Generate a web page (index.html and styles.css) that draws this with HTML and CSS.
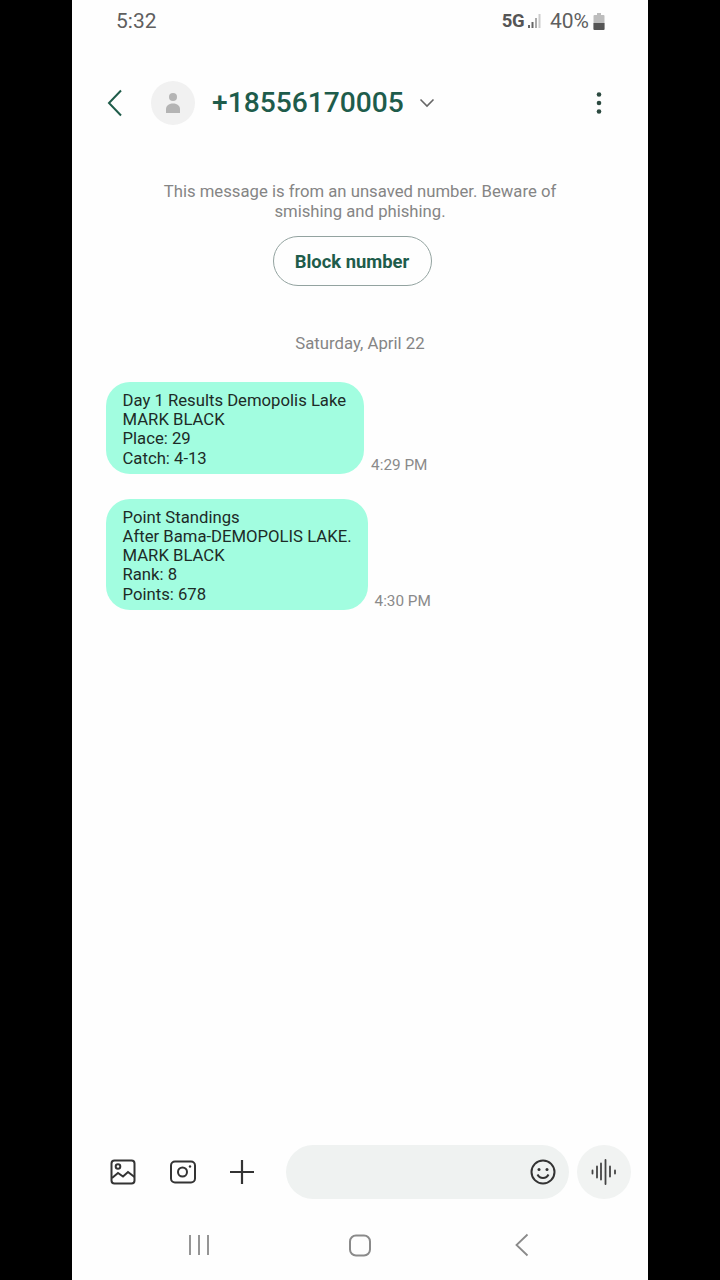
FILE: index.html
```html
<!DOCTYPE html>
<html lang="en">
<head>
<meta charset="utf-8">
<title>Messages</title>
<link rel="stylesheet" href="styles.css">
</head>
<body>
<main class="phone">
  <div class="status">
    <span class="time">5:32</span>
    <div class="status-right">
      <span class="net">5G</span>
      <svg class="signal" width="16" height="16" viewBox="0 0 16 16"><rect x="1" y="12" width="2" height="3" fill="#666"/><rect x="4.5" y="9" width="2" height="6" fill="#666"/><rect x="8" y="5" width="2" height="10" fill="#aaa"/><rect x="11.5" y="1" width="2" height="14" fill="#ccc"/></svg>
      <span class="batt-text">40%</span>
      <svg class="battery" width="12" height="18" viewBox="0 0 12 18"><path d="M4 1h4v2h2.500a1 1 0 0 1 1 1v13a1 1 0 0 1-1 1h-9a1 1 0 0 1-1-1V4a1 1 0 0 1 1-1H4z" fill="#bdbdbd"/><path d="M.5 11h11v6a1 1 0 0 1-1 1h-9a1 1 0 0 1-1-1z" fill="#555"/></svg>
    </div>
  </div>
  <header class="header">
    <svg class="back" width="18" height="28" viewBox="0 0 18 28"><path d="M15 1.500 3 14l12 12.500" fill="none" stroke="#1f5c4a" stroke-width="2"/></svg>
    <div class="avatar">
      <svg width="18" height="24" viewBox="0 0 18 24"><circle cx="9" cy="6" r="4" fill="#b4b4b4"/><path d="M2 22v-4C2 15 4.500 12.500 9 12.500s7 2.500 7 5.500v4z" fill="#b4b4b4"/></svg>
    </div>
    <h1 class="title">+18556170005</h1>
    <svg class="chev" width="16" height="10" viewBox="0 0 16 10"><path d="M1.500 1.500 8 8l6.500-6.500" fill="none" stroke="#666" stroke-width="1.600"/></svg>
    <svg class="more" width="6" height="24" viewBox="0 0 6 24"><circle cx="3" cy="3.500" r="2.300" fill="#2c4a40"/><circle cx="3" cy="12" r="2.300" fill="#2c4a40"/><circle cx="3" cy="20.500" r="2.300" fill="#2c4a40"/></svg>
  </header>
  <section class="thread">
    <p class="warning">This message is from an unsaved number. Beware of smishing and phishing.</p>
    <div class="block-wrap"><button class="block">Block number</button></div>
    <p class="date">Saturday, April 22</p>
    <div class="msg msg-first">
      <div class="bubble">Day 1 Results Demopolis Lake<br>MARK BLACK<br>Place: 29<br>Catch: 4-13</div>
      <span class="stamp">4:29 PM</span>
    </div>
    <div class="msg msg-second">
      <div class="bubble">Point Standings<br>After Bama-DEMOPOLIS LAKE.<br>MARK BLACK<br>Rank: 8<br>Points: 678</div>
      <span class="stamp">4:30 PM</span>
    </div>
  </section>
  <div class="composer">
    <svg class="tool" width="28" height="28" viewBox="0 0 28 28" fill="none" stroke="#333" stroke-width="2"><rect x="2.500" y="2.500" width="23" height="23" rx="3"/><circle cx="9" cy="8.500" r="2.300"/><path d="M3 20l6-5 5 3.500 5-4.500 6.500 5"/></svg>
    <svg class="tool tool-cam" width="28" height="28" viewBox="0 0 28 28" fill="none" stroke="#333" stroke-width="2"><rect x="2" y="3.500" width="24" height="21" rx="4"/><circle cx="13.500" cy="14" r="4.500"/><circle cx="21" cy="8.500" r="1.200" fill="#333" stroke="none"/></svg>
    <svg class="tool tool-plus" width="26" height="26" viewBox="0 0 26 26" stroke="#333" stroke-width="2.200"><path d="M13 1v24M1 13h24"/></svg>
    <div class="input">
      <svg width="28" height="28" viewBox="0 0 28 28" fill="none" stroke="#333" stroke-width="2"><circle cx="14" cy="14" r="11.500"/><circle cx="10" cy="11.500" r="1.500" fill="#333" stroke="none"/><circle cx="18" cy="11.500" r="1.500" fill="#333" stroke="none"/><path d="M8.500 16.500c1.200 2.500 3 3.500 5.500 3.500s4.300-1 5.500-3.500"/></svg>
    </div>
    <div class="voice">
      <svg width="26" height="26" viewBox="0 0 26 26" stroke="#444" stroke-width="1.800" stroke-linecap="round"><path d="M1.500 11.500v3M6 7.500v11M10 4.500v16M14.500 1v24M19 7.500v10M24 11.500v3"/></svg>
    </div>
  </div>
  <nav class="navbar">
    <svg width="22" height="22" viewBox="0 0 22 22" stroke="#8a8a8a" stroke-width="1.800"><path d="M2 1v20M11 1v20M20 1v20"/></svg>
    <svg class="nav-home" width="24" height="24" viewBox="0 0 24 24" fill="none" stroke="#8a8a8a" stroke-width="2"><rect x="2" y="2.500" width="20" height="20" rx="6"/></svg>
    <svg width="16" height="24" viewBox="0 0 16 24" fill="none" stroke="#8a8a8a" stroke-width="1.800"><path d="M13.500 1.500 2.500 12l11 10.500"/></svg>
  </nav>
</main>
</body>
</html>
```
FILE: styles.css
```css
* { box-sizing: border-box; }
html, body { margin: 0; padding: 0; height: 100%; background: #000; overflow: hidden; }
body { display: flex; justify-content: center; font-family: Roboto, "Liberation Sans", sans-serif; }
.phone { width: 576px; height: 1280px; background: #fefefe; display: flex; flex-direction: column; }

.status { height: 42px; padding: 0 43px 0 44px; display: flex; align-items: center; justify-content: space-between; color: #5f5f5f; }
.time { font-size: 21px; }
.status-right { display: flex; align-items: center; }
.net { font-size: 18.500px; font-weight: 700; letter-spacing: -0.5px; color: #555; }
.signal { margin: 0 7px 0 3px; }
.batt-text { font-size: 21px; margin-right: 4px; }

.header { height: 70px; margin-top: 26px; padding: 0 46px 0 34px; display: flex; align-items: center; }
.back { flex: none; }
.avatar { width: 44px; height: 44px; margin-left: 27px; border-radius: 50%; background: #f1f1f1; display: flex; align-items: center; justify-content: center; }
.title { margin: 0 0 2px 17px; font-size: 28.200px; font-weight: 500; color: #1e5c4b; }
.chev { margin-left: 15px; }
.more { margin-left: auto; }

.thread { flex: 1; padding: 0 34px; min-height: 0; }
.warning { margin: 44px auto 0; width: 420px; font-size: 16.700px; line-height: 20px; text-align: center; color: #858585; }
.block-wrap { display: flex; justify-content: center; margin-top: 14px; padding-right: 16px; }
.block { width: 159px; height: 50px; border: 1.500px solid #93a3a0; border-radius: 25px; background: #fefefe; color: #1e5c4b; font: 700 18.400px Roboto, sans-serif; padding: 0; }
.date { margin: 47px 0 0; text-align: center; font-size: 16.750px; line-height: 20px; color: #858585; }

.msg { display: flex; align-items: flex-end; margin-top: 25px; }
.msg-first { margin-top: 29px; }
.bubble { padding: 9px 17px 6px 16.500px; border-radius: 24px; background: #a2fde0; color: #1d2b27; font-size: 16.700px; line-height: 19.200px; }
.msg-first .bubble { padding-right: 18px; }
.msg-second .bubble { padding-right: 16px; }
.stamp { margin: 0 0 0 7px; font-size: 15.300px; line-height: 18px; color: #8a8a8a; }

.composer { height: 54px; padding: 0 17px 0 37px; display: flex; align-items: center; }
.tool { flex: none; }
.tool-cam { margin-left: 32px; }
.tool-plus { margin-left: 32px; }
.input { flex: 1; height: 54px; margin-left: 31px; padding-right: 12px; border-radius: 27px; background: #eff2f1; display: flex; align-items: center; justify-content: flex-end; }
.voice { width: 54px; height: 54px; margin-left: 8px; border-radius: 50%; background: #f1f3f2; display: flex; align-items: center; justify-content: center; }

.navbar { height: 81px; padding: 11px 118px 0 116px; display: flex; align-items: center; justify-content: space-between; }
.nav-home { margin-right: 4px; }
```
